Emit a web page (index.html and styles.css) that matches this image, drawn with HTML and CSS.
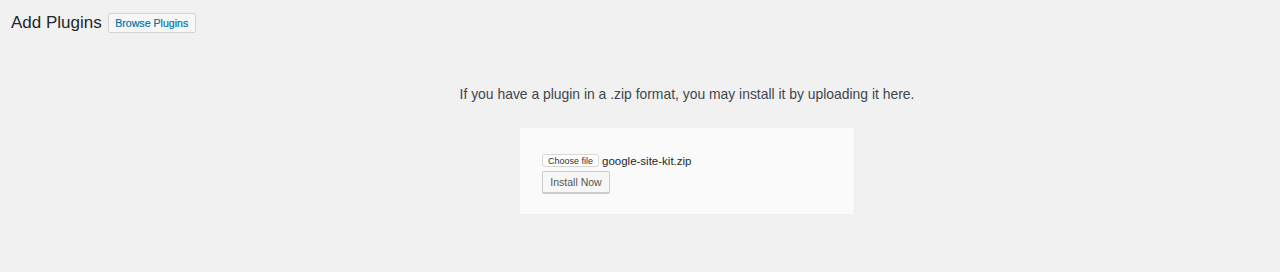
FILE: index.html
```html
<!DOCTYPE html>
<html lang="en">
<head>
    <meta charset="UTF-8">
    <meta name="viewport" content="width=device-width, initial-scale=1.0">
    <title>Add Plugins</title>
    <link rel="stylesheet" href="styles.css">
</head>
<body>
    <!-- Page header -->
    <div class="page-header">
        <h1>Add Plugins</h1>
        <a class="page-title-action" href="#">Browse Plugins</a>
    </div>

    <!-- Upload area -->
    <div class="upload-plugin">
        <p class="install-help">If you have a plugin in a .zip format, you may install it by uploading it here.</p>

        <form class="upload-form">
            <div class="file-row">
                <label class="file-btn">Choose file</label>
                <span class="file-name">google-site-kit.zip</span>
            </div>
            <button class="button" type="button">Install Now</button>
        </form>
    </div>
</body>
</html>
```

FILE: styles.css
```css
/* Basic reset */
* {
    margin: 0;
    padding: 0;
    box-sizing: border-box;
}

body {
    width: 1280px;
    height: 272px;
    background: #f1f1f1;
    color: #23282d;
    font-family: "Liberation Sans", Arial, sans-serif;
    overflow: hidden;
}

/* Header with title and action */
.page-header {
    display: flex;
    align-items: center;
    gap: 6px;
    padding: 13px 11px 0;
}

.page-header h1 {
    font-size: 17px;
    font-weight: 400;
    line-height: 20px;
    color: #23282d;
}

.page-title-action {
    display: inline-flex;
    align-items: center;
    justify-content: center;
    width: 88px;
    height: 20px;
    border: 1px solid #d4d4d4;
    border-radius: 2px;
    background: #f7f7f7;
    color: #0073aa;
    font-size: 10.6px;
    font-weight: 400;
    text-decoration: none;
    -webkit-text-stroke: 0.2px #0073aa;
}

/* Upload area */
.upload-plugin {
    display: flex;
    flex-direction: column;
    align-items: center;
    padding-left: 94px;
}

.install-help {
    margin-top: 52px;
    font-size: 13.9px;
    line-height: 18px;
    color: #40464d;
}

.upload-form {
    margin-top: 24px;
    width: 336px;
    height: 88px;
    padding: 26px 22px 0;
    background: #fafafa;
    border: 1px solid #efefef;
}

.file-row {
    display: flex;
    align-items: center;
    gap: 3px;
    height: 13px;
}

.file-btn {
    display: inline-flex;
    align-items: center;
    justify-content: center;
    width: 57px;
    height: 13px;
    background: #ffffff;
    border: 1px solid #d8d8d8;
    border-radius: 3px;
    font-size: 9px;
    color: #333;
}

.file-name {
    font-size: 11.5px;
    color: #23282d;
}

.button {
    display: block;
    margin-top: 4px;
    width: 68px;
    height: 22px;
    background: #f7f7f7;
    border: 1px solid #cccccc;
    border-radius: 2px;
    box-shadow: 0 1px 0 #cccccc;
    color: #555555;
    font-family: inherit;
    font-size: 10.5px;
}
```
